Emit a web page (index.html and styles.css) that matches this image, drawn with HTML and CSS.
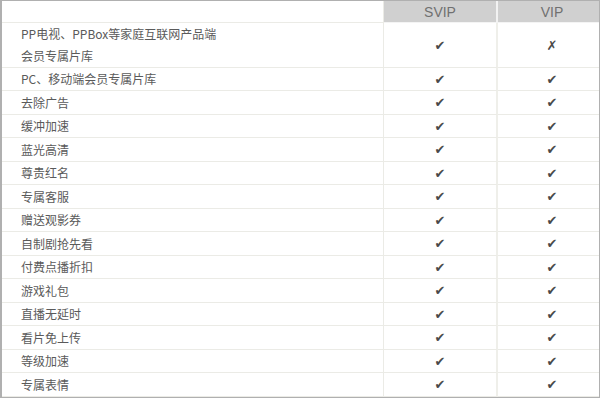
FILE: index.html
```html
<!DOCTYPE html>
<html lang="zh-CN">
<head>
<meta charset="utf-8">
<title>SVIP / VIP 特权对比</title>
<link rel="stylesheet" href="styles.css">
</head>
<body>
<div class="frame">
  <div class="table">
    <div class="row head">
      <div class="cell label"></div>
      <div class="cell mark th">SVIP</div>
      <div class="cell mark th last">VIP</div>
    </div>
    <div class="row tall">
      <div class="cell label">PP电视、PPBox等家庭互联网产品端<br>会员专属片库</div>
      <div class="cell mark"><span class="yes">✔</span></div>
      <div class="cell mark last"><span class="no">✗</span></div>
    </div>
    <div class="row"><div class="cell label">PC、移动端会员专属片库</div><div class="cell mark"><span class="yes">✔</span></div><div class="cell mark last"><span class="yes">✔</span></div></div>
    <div class="row"><div class="cell label">去除广告</div><div class="cell mark"><span class="yes">✔</span></div><div class="cell mark last"><span class="yes">✔</span></div></div>
    <div class="row"><div class="cell label">缓冲加速</div><div class="cell mark"><span class="yes">✔</span></div><div class="cell mark last"><span class="yes">✔</span></div></div>
    <div class="row"><div class="cell label">蓝光高清</div><div class="cell mark"><span class="yes">✔</span></div><div class="cell mark last"><span class="yes">✔</span></div></div>
    <div class="row"><div class="cell label">尊贵红名</div><div class="cell mark"><span class="yes">✔</span></div><div class="cell mark last"><span class="yes">✔</span></div></div>
    <div class="row"><div class="cell label">专属客服</div><div class="cell mark"><span class="yes">✔</span></div><div class="cell mark last"><span class="yes">✔</span></div></div>
    <div class="row"><div class="cell label">赠送观影券</div><div class="cell mark"><span class="yes">✔</span></div><div class="cell mark last"><span class="yes">✔</span></div></div>
    <div class="row"><div class="cell label">自制剧抢先看</div><div class="cell mark"><span class="yes">✔</span></div><div class="cell mark last"><span class="yes">✔</span></div></div>
    <div class="row"><div class="cell label">付费点播折扣</div><div class="cell mark"><span class="yes">✔</span></div><div class="cell mark last"><span class="yes">✔</span></div></div>
    <div class="row"><div class="cell label">游戏礼包</div><div class="cell mark"><span class="yes">✔</span></div><div class="cell mark last"><span class="yes">✔</span></div></div>
    <div class="row"><div class="cell label">直播无延时</div><div class="cell mark"><span class="yes">✔</span></div><div class="cell mark last"><span class="yes">✔</span></div></div>
    <div class="row"><div class="cell label">看片免上传</div><div class="cell mark"><span class="yes">✔</span></div><div class="cell mark last"><span class="yes">✔</span></div></div>
    <div class="row"><div class="cell label">等级加速</div><div class="cell mark"><span class="yes">✔</span></div><div class="cell mark last"><span class="yes">✔</span></div></div>
    <div class="row"><div class="cell label">专属表情</div><div class="cell mark"><span class="yes">✔</span></div><div class="cell mark last"><span class="yes">✔</span></div></div>
  </div>
</div>
</body>
</html>
```
FILE: styles.css
```css
html, body {
  margin: 0;
  padding: 0;
  background: #ffffff;
}

.frame {
  width: 600px;
  height: 398px;
  box-sizing: border-box;
  border-top: 1px solid #b0b0b0;
  border-right: 1px solid #b0b0b0;
  border-bottom: 1px solid #b0b0b0;
  border-left: 2px solid #b0b0b0;
  overflow: hidden;
  font-family: "Noto Sans CJK SC", "Liberation Sans", sans-serif;
  font-size: 12px;
  color: #5a5a5a;
}

.table {
  width: 604px;
  display: flex;
  flex-direction: column;
}

.row {
  display: grid;
  grid-template-columns: 382px 114px 108px;
  height: 24px;
}

.row:nth-child(odd) {
  height: 23px;
}

.row.head {
  height: 22px;
}

.row.tall {
  height: 45px;
}

.cell {
  box-sizing: border-box;
  border-bottom: 1px solid #ebebe6;
  display: flex;
  align-items: center;
}

.label {
  border-right: 1px solid #ebebe6;
  padding-left: 19px;
  line-height: 22px;
}

.mark {
  justify-content: center;
  border-right: 2px solid #efefea;
}

.mark.last {
  border-right: none;
}

.th {
  background: #d0d0d0;
  color: #707070;
  font-family: "Liberation Sans", "Noto Sans", sans-serif;
  font-size: 14px;
  border-bottom-color: #f4f4f4;
}

.th.mark {
  border-right-color: #f2f2f2;
}

.yes, .no {
  font-family: "DejaVu Sans", sans-serif;
  color: #4a4a4a;
  font-size: 13px;
  line-height: 1;
}

.no {
  font-size: 13px;
  font-weight: bold;
}
```
